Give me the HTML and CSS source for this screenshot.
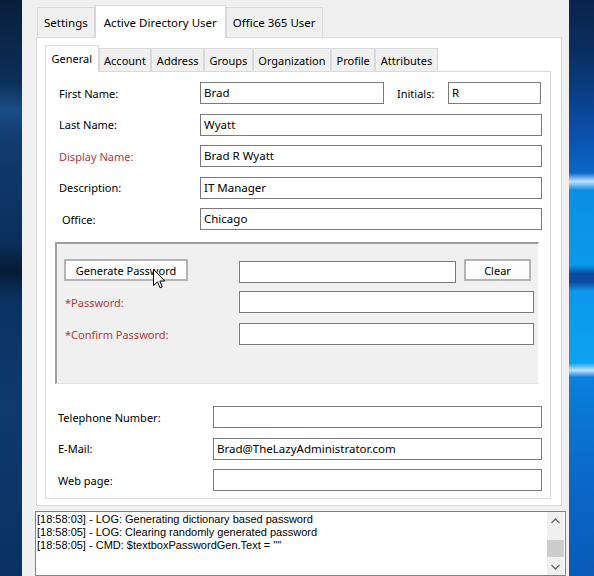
FILE: index.html
```html
<!DOCTYPE html>
<html lang="en">
<head>
  <meta charset="UTF-8" />
  <title>Active Directory User</title>
  <link rel="stylesheet" href="styles.css">
</head>
<body>
  <div class="desk desk-left"></div>

  <div class="window">
    <div class="outer-tabs">
      <div class="tab">Settings</div>
      <div class="tab active">Active Directory User</div>
      <div class="tab">Office 365 User</div>
    </div>

    <div class="outer-page">
      <div class="inner-tabs">
        <div class="itab active">General</div>
        <div class="itab">Account</div>
        <div class="itab">Address</div>
        <div class="itab">Groups</div>
        <div class="itab">Organization</div>
        <div class="itab">Profile</div>
        <div class="itab">Attributes</div>
      </div>

      <div class="inner-page">
        <div class="field">
          <label>First Name:</label>
          <div class="box short">Brad</div>
          <label class="aside">Initials:</label>
          <div class="box tiny">R</div>
        </div>
        <div class="field">
          <label>Last Name:</label>
          <div class="box">Wyatt</div>
        </div>
        <div class="field">
          <label class="red">Display Name:</label>
          <div class="box">Brad R Wyatt</div>
        </div>
        <div class="field">
          <label>Description:</label>
          <div class="box">IT Manager</div>
        </div>
        <div class="field">
          <label class="indent">Office:</label>
          <div class="box">Chicago</div>
        </div>

        <div class="pwd-group">
          <div class="prow">
            <div class="lead"><button class="btn gen">Generate Password</button></div>
            <div class="box gen-box"></div>
            <button class="btn clear">Clear</button>
          </div>
          <div class="prow">
            <label class="lead red">*Password:</label>
            <div class="box pwd"></div>
          </div>
          <div class="prow">
            <label class="lead red">*Confirm Password:</label>
            <div class="box pwd"></div>
          </div>
        </div>

        <div class="field contact first">
          <label>Telephone Number:</label>
          <div class="box"></div>
        </div>
        <div class="field contact">
          <label>E-Mail:</label>
          <div class="box">Brad@TheLazyAdministrator.com</div>
        </div>
        <div class="field contact">
          <label>Web page:</label>
          <div class="box"></div>
        </div>
      </div>
    </div>

    <div class="log">
      <div class="log-lines">
        <div>[18:58:03] - LOG: Generating dictionary based password</div>
        <div>[18:58:05] - LOG: Clearing randomly generated password</div>
        <div>[18:58:05] - CMD: $textboxPasswordGen.Text = ""</div>
      </div>
      <div class="scrollbar">
        <div class="arrow">
          <svg width="9" height="6" viewBox="0 0 9 6"><polyline points="0.5,5 4.5,1 8.5,5" fill="none" stroke="#606060" stroke-width="1.3"/></svg>
        </div>
        <div class="track"><div class="thumb"></div></div>
        <div class="arrow">
          <svg width="9" height="6" viewBox="0 0 9 6"><polyline points="0.5,1 4.5,5 8.5,1" fill="none" stroke="#606060" stroke-width="1.3"/></svg>
        </div>
      </div>
    </div>
  </div>

  <div class="desk desk-right"></div>

  <svg class="cursor" width="13" height="20" viewBox="0 0 13 20">
    <path d="M0.5,0.5 L0.5,16.5 L4.5,12.8 L7,18.8 L9.2,17.9 L6.8,12 L11.8,12 Z" fill="#fff" stroke="#000" stroke-width="1" stroke-linejoin="miter"/>
  </svg>
</body>
</html>
```

FILE: styles.css
```css
* {
  box-sizing: border-box;
}

body {
  margin: 0;
  width: 594px;
  height: 576px;
  overflow: hidden;
  display: flex;
  font-family: "Noto Sans", sans-serif;
  font-size: 11px;
  color: #000;
}

/* desktop behind the window */
.desk {
  flex: none;
  height: 576px;
}

.desk-left {
  width: 22px;
  background: linear-gradient(#0a1e3c 0%, #0c2e58 14%, #1a4c86 19%, #113c70 24%, #0b2f5c 42%, #061a34 47%, #0b3262 52%, #0d3a70 70%, #0b3162 100%);
}

.desk-right {
  flex: 1;
  background: linear-gradient(#0a244c 0%, #0b2e60 9%, #0a4ca6 22%, #0a68c8 30%, #bfe0ff 31.5%, #0a8fe4 33%, #0a9aec 46%, #0b4c9e 47.5%, #0b4c9e 49%, #0b97ec 50.5%, #0ea2f0 63%, #bfe0ff 64.3%, #0a80dc 65.5%, #0a6ccc 80%, #0a5ab8 100%);
}

.window {
  width: 547px;
  flex: none;
  background: #f0f0f0;
  padding: 5px 0 0 14px;
}

/* outer tab strip */
.outer-tabs {
  display: flex;
  align-items: flex-end;
  height: 32px;
  padding-left: 1px;
}

.tab {
  height: 30px;
  padding: 0 6px;
  display: flex;
  align-items: center;
  background: #f0f0f0;
  border: 1px solid #d9d9d9;
  border-bottom: none;
  font-size: 11.5px;
}

.tab.active {
  height: 33px;
  margin-bottom: -1px;
  padding: 0 8px;
  background: #fff;
  position: relative;
  z-index: 1;
}

.outer-page {
  width: 526px;
  height: 469px;
  border: 1px solid #d9d9d9;
  background: #fff;
  padding: 7px 0 0 8px;
}

/* inner tab strip */
.inner-tabs {
  display: flex;
  align-items: flex-end;
  height: 26px;
}

.itab {
  height: 23px;
  padding: 1px 4.5px 0;
  display: flex;
  align-items: center;
  justify-content: center;
  background: #f0f0f0;
  border: 1px solid #d9d9d9;
  border-bottom: none;
  font-size: 11px;
}

.itab.active {
  height: 27px;
  margin-bottom: -1px;
  padding: 0 5.5px 1px;
  background: #fff;
  position: relative;
  z-index: 1;
}

.inner-page {
  width: 506px;
  height: 428px;
  border: 1px solid #d9d9d9;
  padding-top: 10px;
}

/* form rows */
.field {
  display: flex;
  align-items: center;
  height: 22px;
  margin-bottom: 9.5px;
}

.field label {
  width: 154px;
  padding-left: 13px;
}

.field label.indent {
  padding-left: 16px;
}

.field label.aside {
  width: 64px;
}

.red {
  color: #b23a3a;
}

.box {
  width: 342px;
  height: 22px;
  border: 1px solid #7a7a7a;
  background: #fff;
  padding-left: 3px;
  line-height: 20px;
  font-size: 11.5px;
}

.box.short {
  width: 184px;
}

.box.tiny {
  width: 93px;
}

/* password group */
.pwd-group {
  margin: 12px 0 0 9px;
  width: 484px;
  height: 142px;
  background: #f0f0f0;
  border-style: solid;
  border-width: 2px 1px 1px 2px;
  border-color: #a0a0a0 #fbfbfb #e3e3e3 #a0a0a0;
  padding: 15px 0 0 7px;
}

.prow {
  display: flex;
  align-items: center;
  height: 22px;
  margin-bottom: 10px;
}

.prow .lead {
  width: 175px;
  padding-left: 1px;
}

.prow div.lead {
  padding-left: 0;
}

.btn {
  height: 22px;
  border: 2px solid #b4b4b4;
  background: #fdfdfd;
  font-family: "Noto Sans", sans-serif;
  font-size: 11px;
  color: #000;
  padding: 0;
}

.btn.gen {
  width: 124px;
}

.box.gen-box {
  width: 217px;
  margin-top: 4px;
}

.btn.clear {
  width: 67px;
  margin-left: 8px;
}

.box.pwd {
  width: 295px;
}

.field.contact label {
  width: 167px;
  padding-left: 12px;
}

.field.contact .box {
  width: 329px;
}

.field.contact.first {
  margin-top: 22px;
}

/* log output */
.log {
  margin: 5px 0 0 -1px;
  width: 531px;
  height: 65px;
  border: 1px solid #828282;
  background: #fff;
  display: flex;
  font-family: "Liberation Sans", Arial, sans-serif;
  font-size: 11px;
}

.log-lines {
  flex: 1;
  padding: 1px 0 0 1px;
  line-height: 13px;
}

.scrollbar {
  width: 17px;
  margin-right: 1px;
  display: flex;
  flex-direction: column;
  background: #f0f0f0;
}

.arrow {
  height: 17px;
  display: flex;
  align-items: center;
  justify-content: center;
}

.track {
  flex: 1;
  padding-top: 11px;
}

.thumb {
  height: 17px;
  background: #cdcdcd;
}

/* mouse pointer over the page */
.cursor {
  position: absolute;
  left: 153px;
  top: 269px;
}
```
